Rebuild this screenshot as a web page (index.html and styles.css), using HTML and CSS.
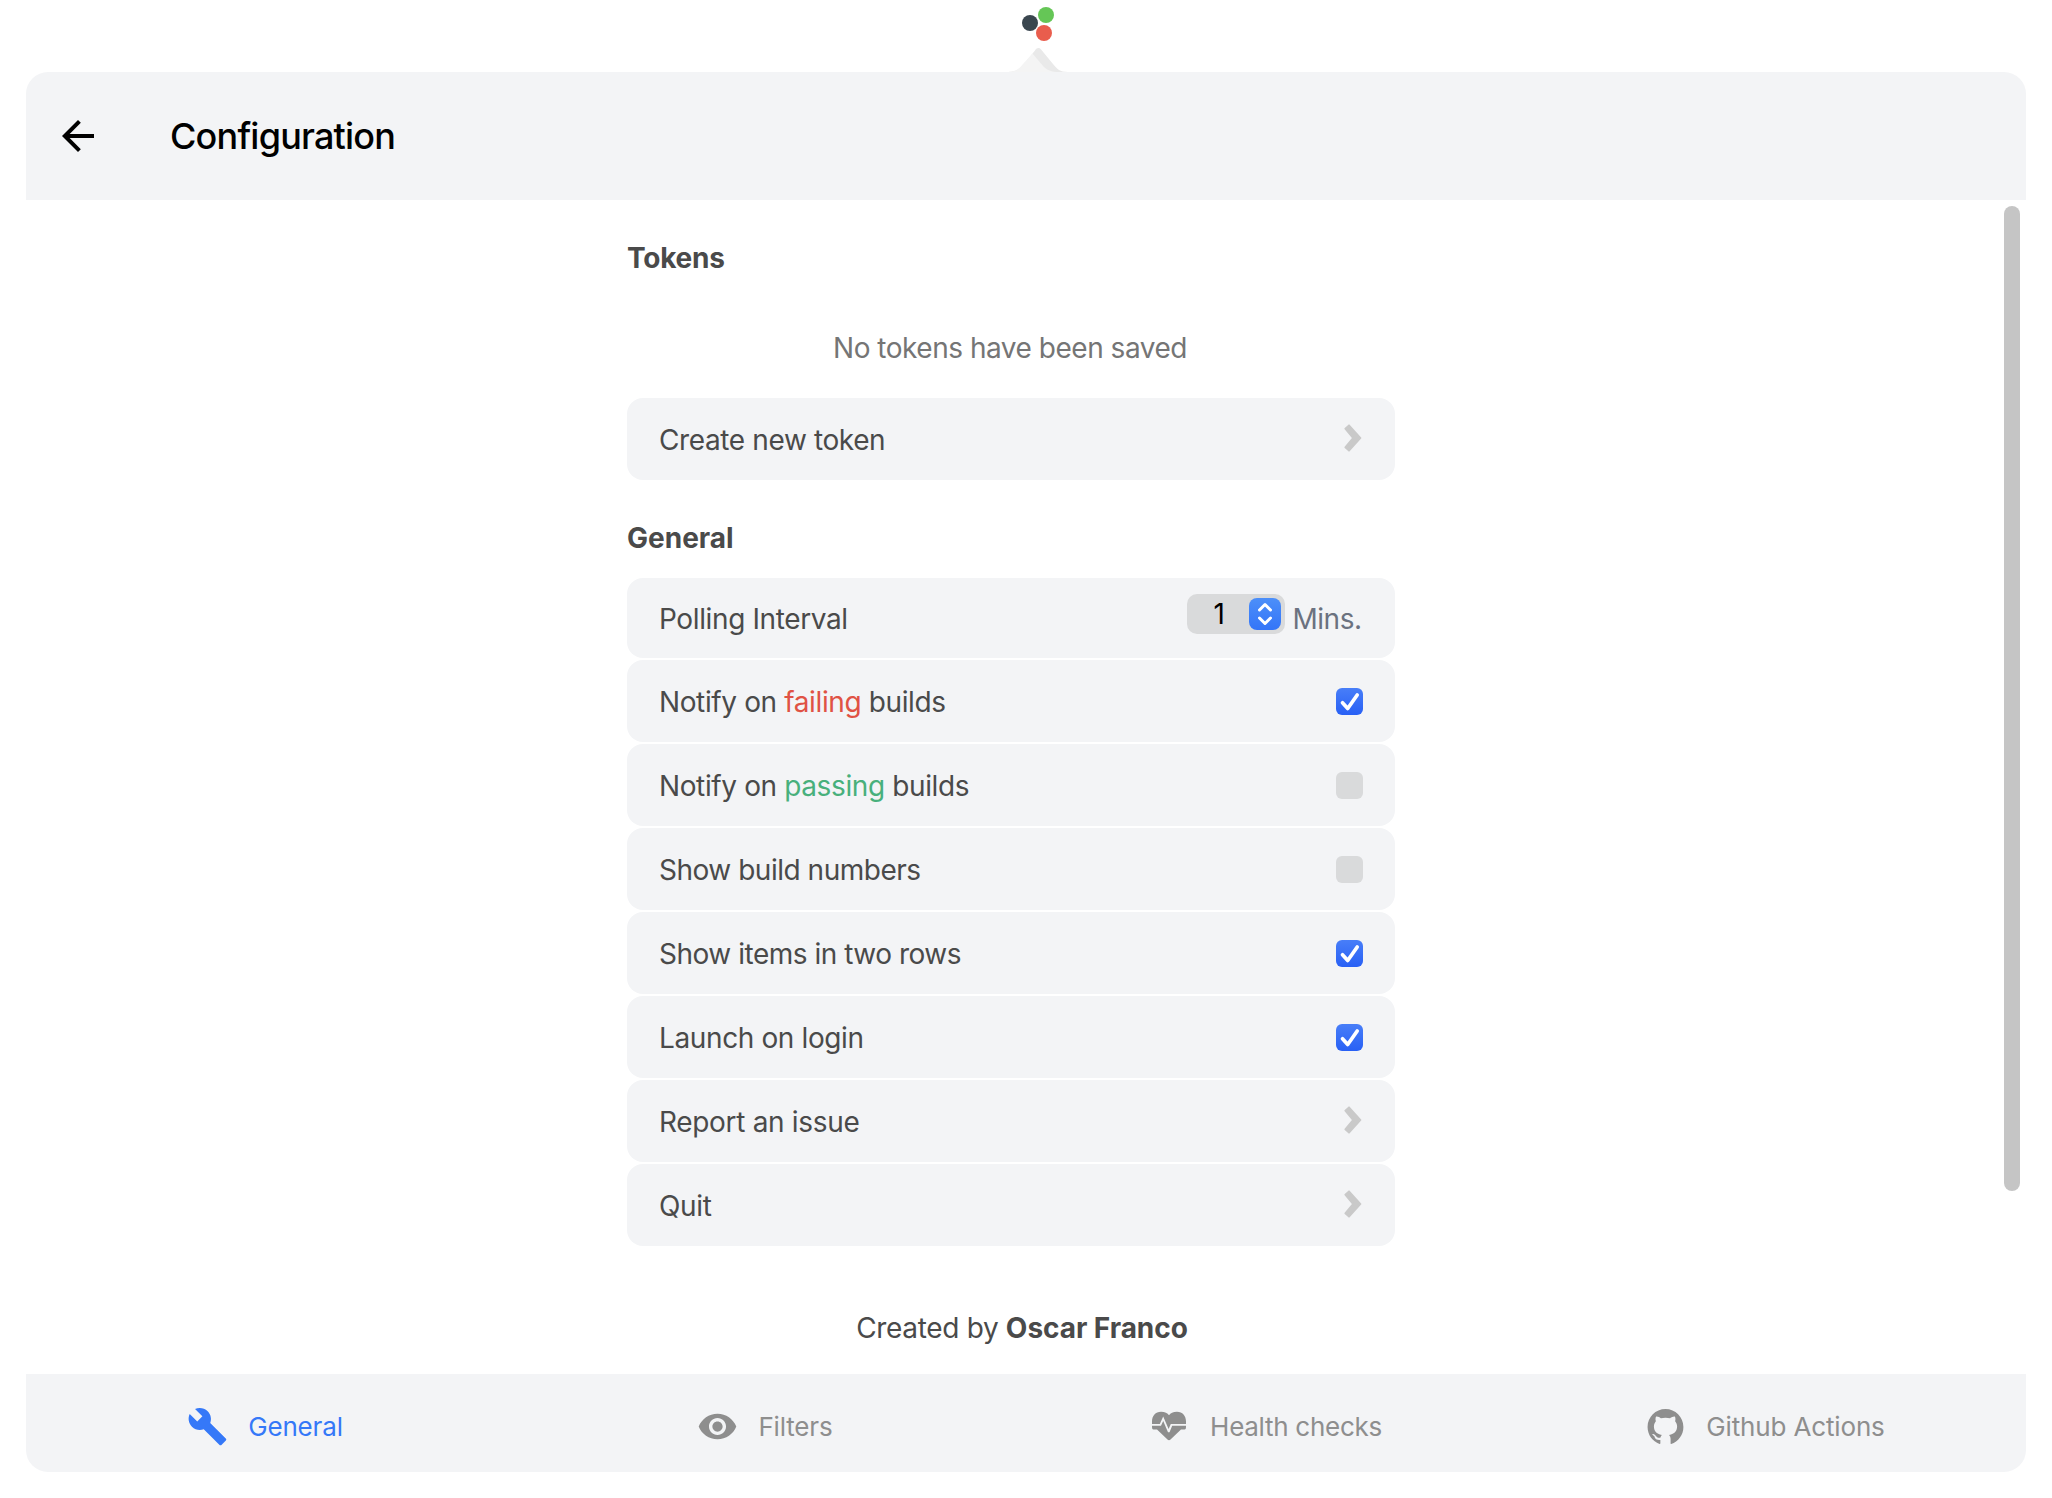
FILE: index.html
```html
<!DOCTYPE html>
<html lang="en">
<head>
<meta charset="utf-8">
<title>Configuration</title>
<link rel="stylesheet" href="styles.css">
</head>
<body>
<svg class="defs" aria-hidden="true">
  <symbol id="chevron" viewBox="0 0 18 28"><path d="M1.300 4.700 L5 1.300 L16.500 14 L5 26.700 L1.300 23.300 L9 14Z" fill="#c9c9c9" stroke="#c9c9c9" stroke-width="1.800" stroke-linejoin="round"/></symbol>
  <symbol id="tick" viewBox="0 0 27 27"><path d="M6.500 14.800 L11.700 20.500 L21.200 7" fill="none" stroke="#fff" stroke-width="3.700" stroke-linecap="round" stroke-linejoin="round"/></symbol>
</svg>
<div class="tray">
  <svg class="logo" width="26" height="36" viewBox="0 0 26 36"><circle cx="8" cy="19" r="8" fill="#3a464f"/><circle cx="24" cy="11" r="8" fill="#65c656"/><circle cx="22" cy="29" r="8" fill="#e95d4d"/></svg>
  <svg class="pointer" width="60" height="24" viewBox="0 0 60 24"><path d="M0 24 C8 24 12 21 16 16 L27 2.500 C29 -0.600 31.500 -0.600 33.500 2 L45 16 C49 21 52 24 60 24Z" fill="#e9e9e9"/><path d="M0 24 C8 23.500 11 21 15 16 L24.500 5.500 L35 18 C39 22 43 24 52 24Z" fill="#f4f4f4"/></svg>
</div>
<main class="panel">
  <header class="header">
    <svg width="48" height="48" viewBox="0 0 24 24"><path d="M20 11H7.830l5.590-5.590L12 4l-8 8 8 8 1.410-1.410L7.830 13H20z"/></svg>
    <h1 class="title">Configuration</h1>
  </header>
  <section class="content">
    <div class="column">
      <h2 class="heading">Tokens</h2>
      <p class="empty">No tokens have been saved</p>
      <div class="row"><span class="label">Create new token</span><svg class="chevron"><use href="#chevron"/></svg></div>
      <h2 class="heading heading-general">General</h2>
      <div class="rows">
        <div class="row row-first"><span class="label">Polling Interval</span>
          <div class="interval"><span class="select"><span class="value">1</span><svg class="stepper" width="32" height="32" viewBox="0 0 32 32"><path d="M10.500 12 L16 6.500 L21.500 12 M10.500 20 L16 25.500 L21.500 20" fill="none" stroke="#fff" stroke-width="3" stroke-linecap="round" stroke-linejoin="round"/></svg></span><span class="mins">Mins.</span></div></div>
        <div class="row"><span class="label">Notify on <span class="failing">failing</span> builds</span><span class="check on"><svg width="27" height="27"><use href="#tick"/></svg></span></div>
        <div class="row"><span class="label">Notify on <span class="passing">passing</span> builds</span><span class="check"></span></div>
        <div class="row"><span class="label tight">Show build numbers</span><span class="check"></span></div>
        <div class="row"><span class="label tight">Show items in two rows</span><span class="check on"><svg width="27" height="27"><use href="#tick"/></svg></span></div>
        <div class="row"><span class="label">Launch on login</span><span class="check on"><svg width="27" height="27"><use href="#tick"/></svg></span></div>
        <div class="row"><span class="label loose">Report an issue</span><svg class="chevron"><use href="#chevron"/></svg></div>
        <div class="row"><span class="label loose">Quit</span><svg class="chevron"><use href="#chevron"/></svg></div>
      </div>
      <p class="credit">Created by <b>Oscar Franco</b></p>
    </div>
    <div class="scrollbar"></div>
  </section>
  <nav class="tabs">
    <a class="tab active"><svg class="icon" viewBox="0 0 24 24"><path d="M22.700 19l-9.100-9.100c.9-2.300.4-5-1.500-6.900-2-2-5-2.400-7.400-1.300L9 6 6 9 1.600 4.700C.4 7.100.9 10.100 2.900 12.100c1.900 1.900 4.600 2.400 6.900 1.500l9.100 9.100c.4.4 1 .4 1.400 0l2.300-2.300c.5-.4.5-1.100.1-1.400z"/></svg><span>General</span></a>
    <a class="tab"><svg class="icon" viewBox="0 0 24 24"><path d="M12 4.500C7 4.500 2.730 7.610 1 12c1.730 4.390 6 7.500 11 7.500s9.270-3.110 11-7.500c-1.730-4.390-6-7.500-11-7.500zM12 17c-2.760 0-5-2.240-5-5s2.240-5 5-5 5 2.240 5 5-2.240 5-5 5zm0-8c-1.660 0-3 1.340-3 3s1.340 3 3 3 3-1.340 3-3-1.340-3-3-3z"/></svg><span>Filters</span></a>
    <a class="tab health"><svg class="icon" viewBox="0 0 42 42"><path d="M4 19 V16.500 C4 11 7.500 6.800 13 6.800 C17 6.800 19.500 8.300 21 10.300 C22.500 8.300 25 6.800 29 6.800 C34.500 6.800 38 11 38 16.500 V19 H22.800 L20.600 24 L15.200 11.500 L11.800 19Z"/><path d="M4 20.800 H13 L15.200 16 L20 27.200 H21.500 L24.200 20.800 H38 V22 C38 24.500 37 24.600 35.500 24.600 H33 L22.500 34.600 C21.500 35.500 20.500 35.500 19.500 34.600 L9 24.600 H6.500 C5 24.600 4 24.500 4 22Z"/></svg><span>Health checks</span></a>
    <a class="tab"><svg class="icon" viewBox="0 0 1024 1024"><path d="M511.600 76.300C264.300 76.200 64 276.400 64 523.500 64 718.900 189.300 885 363.800 946c23.500 5.900 19.900-10.800 19.900-22.200v-77.500c-135.700 15.900-141.200-73.900-150.300-88.900C215 726 171.500 718 184.500 703c30.900-15.900 62.400 4 98.900 57.900 26.400 39.100 77.900 32.500 104 26 5.700-23.500 17.900-44.500 34.700-60.800-140.600-25.200-199.200-111-199.200-213 0-49.500 16.300-95 48.300-131.700-20.400-60.500 1.900-112.300 4.900-120 58.100-5.200 118.500 41.600 123.200 45.300 33-8.900 70.700-13.600 112.900-13.600 42.400 0 80.200 4.900 113.500 13.900 11.300-8.600 67.300-48.800 121.300-43.900 2.900 7.700 24.700 58.300 5.500 118 32.400 36.800 48.900 82.700 48.900 132.300 0 102.200-59 188.100-200 212.900a127.500 127.500 0 0 1 38.100 91v112.500c.8 9 0 17.900 15 17.900 177.100-59.700 304.600-227 304.600-424.100 0-247.200-200.400-447.300-447.500-447.300z"/></svg><span>Github Actions</span></a>
  </nav>
</main>
</body>
</html>
```
FILE: styles.css
```css
* { box-sizing: border-box; }
body { margin: 0; width: 2052px; height: 1498px; background: #fff; font: 400 28px/34px Inter, sans-serif; color: #4a4a4a; overflow: hidden; }
h1, h2, p { margin: 0; }
.defs { position: absolute; width: 0; height: 0; }
.tray { height: 72px; padding: 4px 0 0 1022px; position: relative; }
.logo { display: block; overflow: visible; }
.pointer { position: absolute; left: 1008px; bottom: 0; }
.panel { margin: 0 26px; height: 1400px; display: flex; flex-direction: column; border-radius: 22px; overflow: hidden; }
.header { height: 128px; flex: none; background: #f3f4f6; display: flex; align-items: center; padding-left: 28px; gap: 68px; }
.title { font-size: 36px; line-height: 44px; font-weight: 500; color: #000; letter-spacing: -0.8px; }
.content { flex: 1; display: flex; justify-content: space-between; padding: 6px 6px 0 601px; }
.column { width: 768px; padding-top: 35px; }
.heading { font-size: 28px; line-height: 34px; font-weight: 700; letter-spacing: -0.25px; }
.empty { margin: 56px 0 33px; padding-right: 2px; text-align: center; color: #757575; letter-spacing: -0.48px; }
.heading-general { margin: 41px 0 23px; letter-spacing: 0; }
.rows { display: flex; flex-direction: column; gap: 2px; }
.row { height: 82px; border-radius: 16px; background: #f3f4f6; display: flex; align-items: center; justify-content: space-between; padding: 0 32px; }
.row-first { height: 80px; }
.label { padding-top: 2px; letter-spacing: -0.38px; }
.label.tight { letter-spacing: -0.48px; }
.label.loose { letter-spacing: -0.32px; }
.failing { color: #e05244; }
.passing { color: #48b07c; }
.chevron { width: 18px; height: 28px; margin: 0 1px 2px 0; }
.interval { display: flex; align-items: center; gap: 8px; }
.select { width: 98px; height: 40px; margin-bottom: 8px; padding: 0 4px 0 27px; border-radius: 10px; background: #d9dadb; color: #000; display: flex; align-items: center; justify-content: space-between; }
.stepper { border-radius: 8px; background: linear-gradient(#4c8ff9, #3475f8); }
.mins { color: #6b7280; padding: 2px 1.5px 0 0; letter-spacing: -0.5px; }
.check { width: 27px; height: 27px; border-radius: 6px; background: #d9dadb; }
.check.on { background: linear-gradient(#487ef8, #2860f5); }
.check svg { display: block; }
.credit { margin-top: 65px; padding-left: 22px; text-align: center; letter-spacing: -0.33px; }
.credit b { font-weight: 700; letter-spacing: -0.05px; }
.scrollbar { width: 16px; height: 985px; border-radius: 8px; background: #c5c5c5; }
.tabs { height: 98px; flex: none; background: #f3f4f6; display: grid; grid-template-columns: repeat(4, 1fr); }
.tab { display: flex; align-items: center; justify-content: center; gap: 20px; padding: 6px 22px 0 0; font-size: 26px; color: #8e8e8e; letter-spacing: -0.15px; }
.tab.health { letter-spacing: -0.28px; }
.tab span { padding-top: 2px; }
.tab.active { color: #3578f8; }
.icon { width: 41px; height: 41px; fill: currentColor; }
.health .icon { width: 42px; height: 42px; }
```
